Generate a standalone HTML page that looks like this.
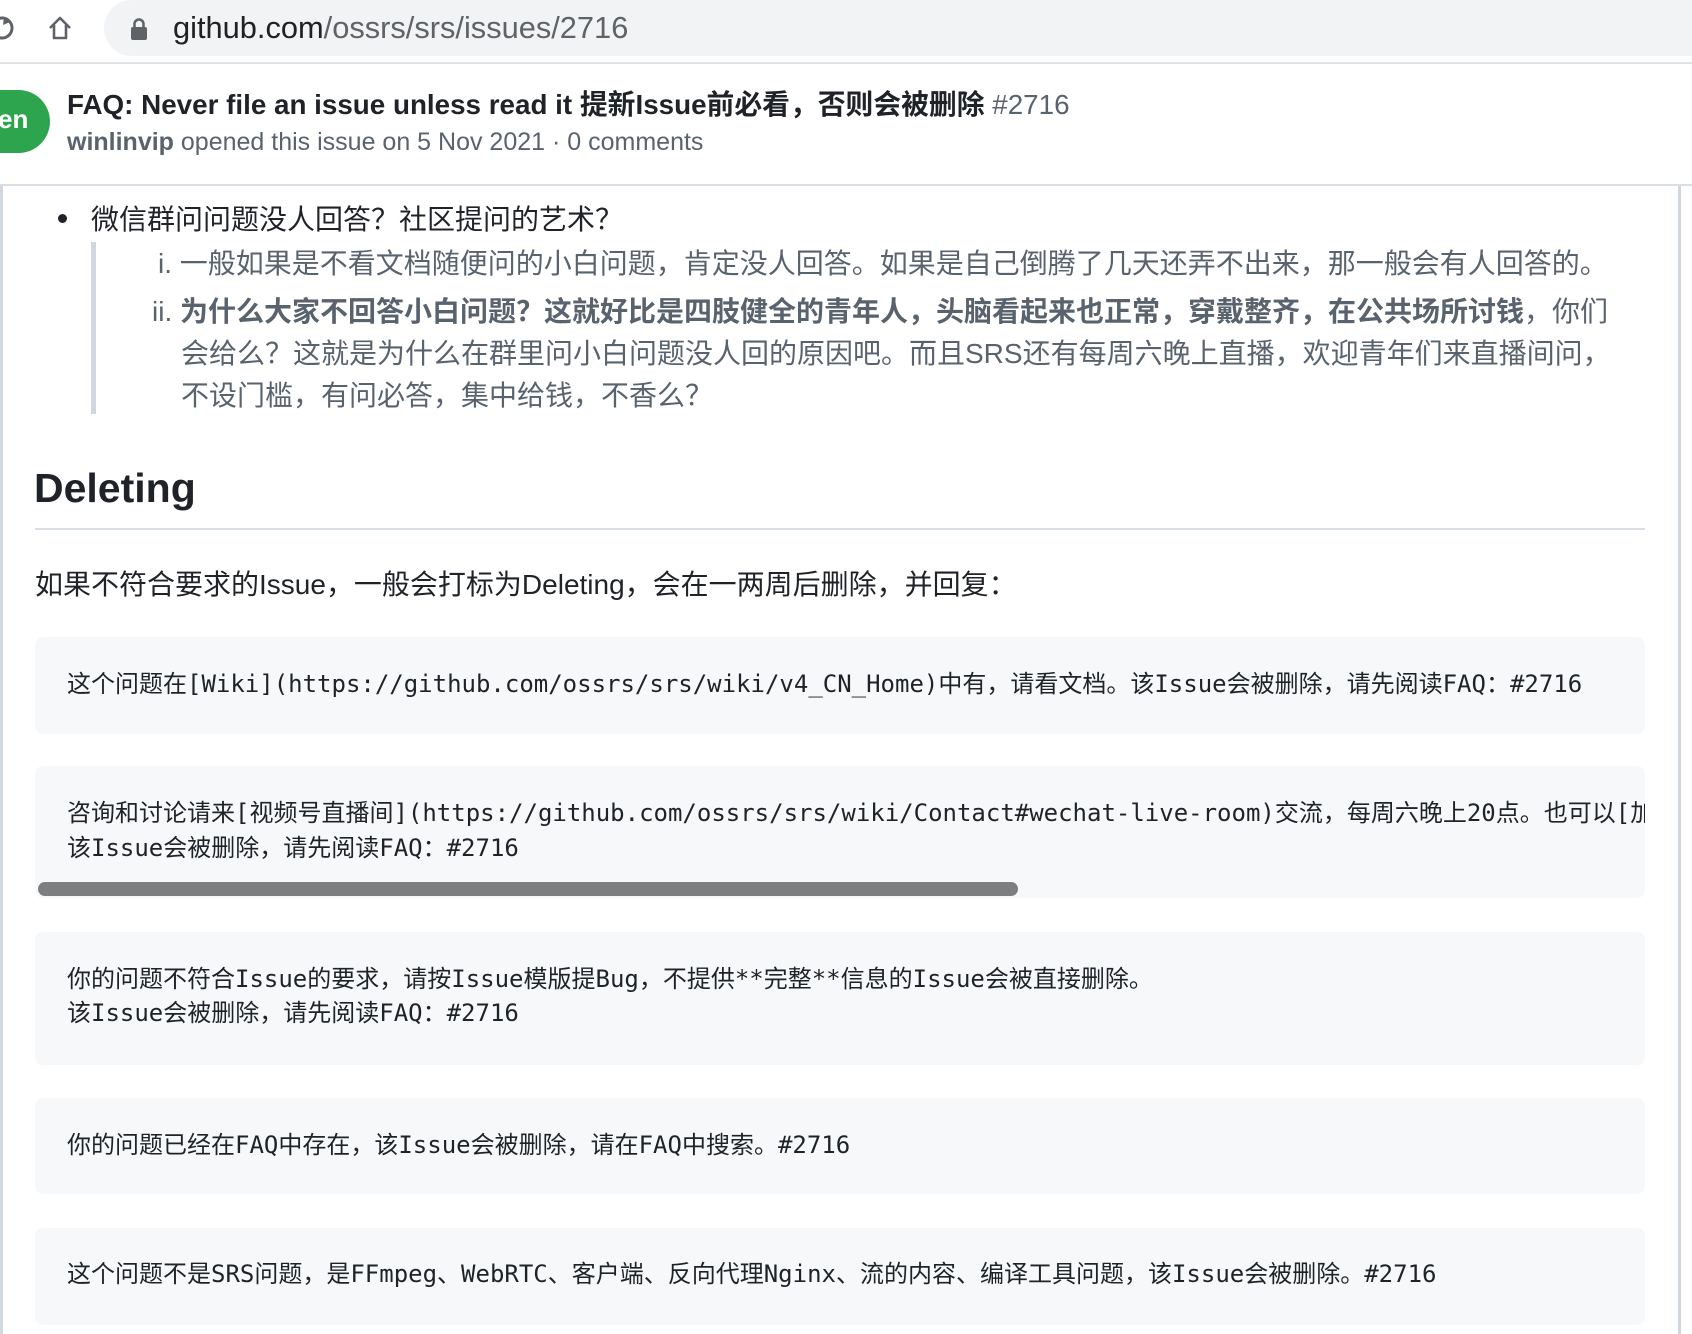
<!DOCTYPE html>
<html><head><meta charset="utf-8"><style>
*{margin:0;padding:0;box-sizing:border-box}
body{width:1692px;height:1334px;overflow:hidden;background:#fff;font-family:"Liberation Sans","Noto Sans CJK SC",sans-serif;color:#1f2328;position:relative}
.abs{position:absolute;white-space:nowrap}
.bar{position:absolute;left:0;top:0;width:1692px;height:64px;background:#fff;border-bottom:2px solid #dfe1e5}
.url{position:absolute;left:104px;top:0;width:1620px;height:56px;background:#f1f3f4;border-radius:28px}
.mono{font-family:"DejaVu Sans Mono","Noto Sans CJK SC",monospace;font-size:24px;color:#1f2328}
.code{position:absolute;left:35px;width:1610px;background:#f6f8fa;border-radius:8px}
.bq{color:#59636e;font-size:28px}
</style></head><body>
<div class="bar"></div>
<div class="url"></div>
<svg class="abs" style="left:0;top:14px" width="14" height="28" viewBox="0 0 14 28"><path d="M-4 6 A10 10 0 1 1 -4 22" fill="none" stroke="#5f6368" stroke-width="3"/><path d="M4 3 L10 8 L3 11Z" fill="#5f6368"/></svg>
<svg class="abs" style="left:46px;top:14px" width="28" height="28" viewBox="0 0 28 28"><path d="M4 14 L14 4 L24 14 M8 11 V24 H20 V11" fill="none" stroke="#5f6368" stroke-width="2.6" stroke-linejoin="round"/></svg>
<svg class="abs" style="left:130px;top:17px" width="18" height="24" viewBox="0 0 18 24"><rect x="1" y="10" width="16" height="13" rx="2" fill="#5f6368"/><path d="M4.5 11 V7 a4.5 4.5 0 0 1 9 0 V11" fill="none" stroke="#5f6368" stroke-width="2.5"/></svg>
<div class="abs" style="left:173px;top:10px;font-size:30.8px;color:#202124">github.com<span style="color:#5f6368">/ossrs/srs/issues/2716</span></div>

<div class="abs" style="left:0;top:184px;width:1692px;height:2px;background:#d8dee4"></div>
<div class="abs" style="left:-40px;top:90px;width:90px;height:63px;border-radius:32px;background:#2da44e"></div>
<div class="abs" style="left:-2px;top:104px;font-size:26px;color:#fff;font-weight:bold">en</div>
<div class="abs" style="left:67px;top:83px;font-size:27.8px;font-weight:bold;color:#1f2328">FAQ: Never file an issue unless read it 提新Issue前必看，否则会被删除 <span style="font-weight:normal;color:#59636e">#2716</span></div>
<div class="abs" style="left:67px;top:128px;font-size:25px;color:#59636e"><b>winlinvip</b> opened this issue on 5 Nov 2021 · 0 comments</div>

<div class="abs" style="left:0;top:186px;width:3px;height:1148px;background:#d0d7de"></div>
<div class="abs" style="left:1678px;top:186px;width:3px;height:1148px;background:#d0d7de"></div>

<div class="abs" style="left:58px;top:214px;width:9px;height:9px;border-radius:50%;background:#1f2328"></div>
<div class="abs" style="left:91px;top:198px;font-size:28px">微信群问问题没人回答？社区提问的艺术？</div>
<div class="abs" style="left:91px;top:242px;width:5px;height:172px;background:#d0d7de"></div>
<div class="abs bq" style="left:158px;top:242px">i. 一般如果是不看文档随便问的小白问题，肯定没人回答。如果是自己倒腾了几天还弄不出来，那一般会有人回答的。</div>
<div class="abs bq" style="left:152px;top:290px">ii. <b style="color:#59636e">为什么大家不回答小白问题？这就好比是四肢健全的青年人，头脑看起来也正常，穿戴整齐，在公共场所讨钱</b>，你们</div>
<div class="abs bq" style="left:181px;top:332px">会给么？这就是为什么在群里问小白问题没人回的原因吧。而且SRS还有每周六晚上直播，欢迎青年们来直播间问，</div>
<div class="abs bq" style="left:181px;top:374px">不设门槛，有问必答，集中给钱，不香么？</div>

<div class="abs" style="left:34px;top:465px;font-size:41px;font-weight:bold">Deleting</div>
<div class="abs" style="left:35px;top:528px;width:1610px;height:2px;background:#d8dee4"></div>
<div class="abs" style="left:35px;top:563px;font-size:28px">如果不符合要求的Issue，一般会打标为Deleting，会在一两周后删除，并回复：</div>

<div class="code" style="top:637px;height:97px"></div>
<div class="abs mono" style="left:67px;top:664px">这个问题在[Wiki](https://github.com/ossrs/srs/wiki/v4_CN_Home)中有，请看文档。该Issue会被删除，请先阅读FAQ：#2716</div>

<div class="code" style="top:766px;height:132px;overflow:hidden"><div class="abs mono" style="left:32px;top:27px">咨询和讨论请来[视频号直播间](https://github.com/ossrs/srs/wiki/Contact#wechat-live-room)交流，每周六晚上20点。也可以[加</div><div class="abs mono" style="left:32px;top:62px">该Issue会被删除，请先阅读FAQ：#2716</div></div>
<div class="abs" style="left:38px;top:882px;width:980px;height:14px;border-radius:7px;background:#7d7e80"></div>

<div class="code" style="top:932px;height:133px"></div>
<div class="abs mono" style="left:67px;top:959px">你的问题不符合Issue的要求，请按Issue模版提Bug，不提供**完整**信息的Issue会被直接删除。</div>
<div class="abs mono" style="left:67px;top:993px">该Issue会被删除，请先阅读FAQ：#2716</div>

<div class="code" style="top:1098px;height:96px"></div>
<div class="abs mono" style="left:67px;top:1125px">你的问题已经在FAQ中存在，该Issue会被删除，请在FAQ中搜索。#2716</div>

<div class="code" style="top:1228px;height:97px"></div>
<div class="abs mono" style="left:67px;top:1254px">这个问题不是SRS问题，是FFmpeg、WebRTC、客户端、反向代理Nginx、流的内容、编译工具问题，该Issue会被删除。#2716</div>
</body></html>
